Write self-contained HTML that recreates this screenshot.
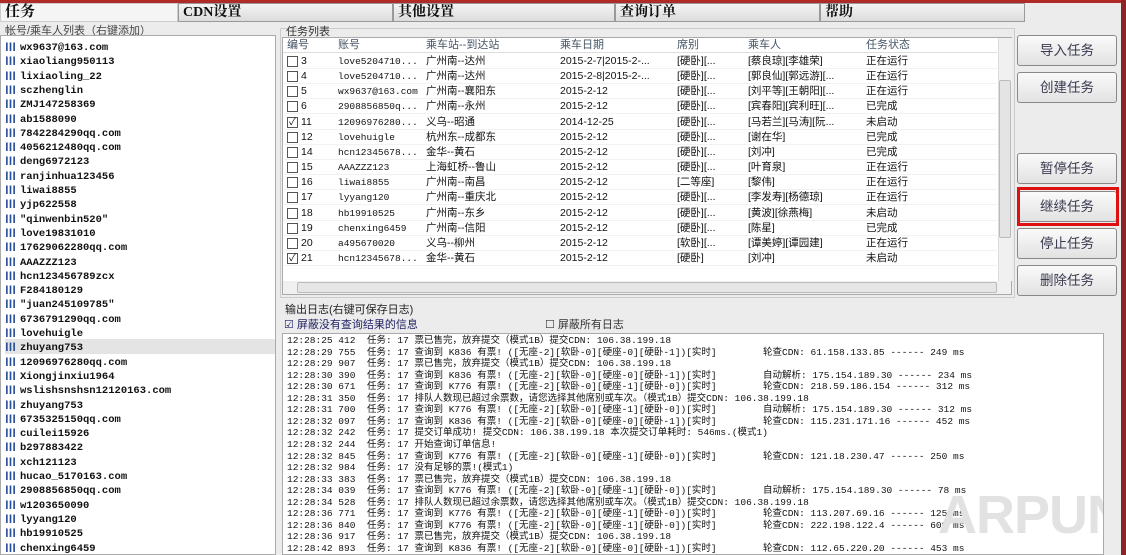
<!DOCTYPE html>
<html><head><meta charset="utf-8"><style>
*{margin:0;padding:0;box-sizing:border-box}
html,body{width:1126px;height:555px;overflow:hidden}
body{background:#ececec;font-family:"Liberation Sans","Noto Sans CJK SC",sans-serif;font-size:11px;color:#111;position:relative}
.a{position:absolute;white-space:nowrap}
.tab{position:absolute;top:3px;height:19px;background:linear-gradient(#f4f4f4,#dcdcdc);border:1px solid #999;font-weight:bold;font-size:14px;font-family:"Liberation Serif","Noto Serif CJK SC",serif;padding-left:4px;line-height:17px}
.mono{font-family:"Liberation Mono","Noto Sans CJK SC",monospace}
.li{position:absolute;left:4px;font-family:"Liberation Mono","Noto Sans CJK SC",monospace;font-weight:bold;font-size:10.5px;white-space:nowrap}
.ic{display:inline-block;width:11px;height:10px;color:#2a4f9a;font-size:11px;font-weight:bold;margin-right:4px;vertical-align:-1px}
.row{position:absolute;left:284px;height:15px;width:713px;font-size:10.5px;line-height:15px}
.row span{position:absolute;white-space:nowrap}
.cb{position:absolute;left:3px;top:2px;width:11px;height:11px;border:1px solid #555;background:#fff;font-size:10px;line-height:9px;text-align:center}
.lg{position:absolute;left:286px;font-family:"Liberation Mono","Noto Sans CJK SC",monospace;font-size:9.5px;white-space:nowrap;line-height:12px}
.lg b{font-weight:normal;position:absolute}
.btn{position:absolute;left:1017px;width:100px;height:31px;border:1px solid #888;border-radius:3px;background:linear-gradient(#fafafa,#e2e2e2);font-size:13.5px;color:#3a3a50;text-align:center;line-height:30px}
</style></head><body>
<div class="a" style="left:0;top:0;width:1126px;height:3px;background:#b02a2a"></div>
<div class="a" style="right:0;top:0;width:5px;height:555px;background:#8b2525"></div>
<div class="tab" style="left:0;width:178px;background:#f5f5f5;border-color:#ccc;font-size:15px">任务</div>
<div class="tab" style="left:178px;width:215px">CDN设置</div>
<div class="tab" style="left:393px;width:222px">其他设置</div>
<div class="tab" style="left:615px;width:205px">查询订单</div>
<div class="tab" style="left:820px;width:205px">帮助</div>
<div class="a" style="left:5px;top:22px;font-size:11px;color:#444">帐号/乘车人列表（右键添加）</div>
<div class="a" style="left:0;top:35px;width:276px;height:520px;background:#fff;border:1px solid #aaa;overflow:hidden"><div id="L"></div></div>
<div class="a" style="left:280px;top:28px;width:735px;height:270px;border:1px solid #ccc"></div>
<div class="a" style="left:286px;top:23px;color:#333">任务列表</div>

<div class="a" style="left:282px;top:37px;width:730px;height:258px;background:#fff;border:1px solid #aaa"></div>
<div class="a" style="left:283px;top:38px;width:714px;height:15px;background:#fff;border-bottom:1px solid #ddd;color:#456;font-size:11px;line-height:15px">
<span class="a" style="left:4px">编号</span><span class="a" style="left:55px">账号</span><span class="a" style="left:143px">乘车站--到达站</span><span class="a" style="left:277px">乘车日期</span><span class="a" style="left:394px">席别</span><span class="a" style="left:465px">乘车人</span><span class="a" style="left:583px">任务状态</span></div>
<div class="a" style="left:998px;top:38px;width:14px;height:243px;background:#f0f0f0;border-left:1px solid #ddd"></div>
<div class="a" style="left:999px;top:80px;width:12px;height:158px;background:#e4e4e4;border:1px solid #bbb;border-radius:2px"></div>
<div class="a" style="left:283px;top:281px;width:728px;height:13px;background:#f0f0f0"></div>
<div class="a" style="left:297px;top:282px;width:700px;height:11px;background:#e6e6e6;border:1px solid #bbb;border-radius:2px"></div>
<div id="T"></div>

<div class="a" style="left:285px;top:301px;color:#222">输出日志(右键可保存日志)</div>
<div class="a" style="left:284px;top:316px;color:#226">☑ 屏蔽没有查询结果的信息</div>
<div class="a" style="left:545px;top:316px;color:#333">☐ 屏蔽所有日志</div>
<div class="a" style="left:282px;top:333px;width:822px;height:222px;background:#fff;border:1px solid #aaa;overflow:hidden"><div id="G"></div>
<div class="a" style="font-size:54px;font-weight:bold;color:#e2e2e2;top:150px;left:655px;letter-spacing:-1px">ARPUN</div></div>

<div class="btn" style="top:35px">导入任务</div>
<div class="btn" style="top:72px">创建任务</div>
<div class="btn" style="top:153px">暂停任务</div>
<div class="btn" style="top:191px">继续任务</div>
<div class="a" style="left:1017px;top:187px;width:102px;height:39px;border:3px solid #e01010"></div>
<div class="btn" style="top:228px">停止任务</div>
<div class="btn" style="top:265px">删除任务</div>

<script>
var acc=["wx9637@163.com","xiaoliang950113","lixiaoling_22","sczhenglin","ZMJ147258369","ab1588090","7842284290qq.com","4056212480qq.com","deng6972123","ranjinhua123456","liwai8855","yjp622558","\"qinwenbin520\"","love19831010","17629062280qq.com","AAAZZZ123","hcn123456789zcx","F284180129","\"juan245109785\"","6736791290qq.com","lovehuigle","zhuyang753","12096976280qq.com","Xiongjinxiu1964","wslishsnshsn12120163.com","zhuyang753","6735325150qq.com","cuilei15926","b297883422","xch121123","hucao_5170163.com","2908856850qq.com","w1203650090","lyyang120","hb19910525","chenxing6459","2908856850"];
var h="";acc.forEach(function(a,i){var y=3+i*14.3;h+='<div class="li" style="top:'+y+'px'+(i==21?';background:#e4e4e4;width:270px':'')+'"><span class="ic">Ⅲ</span>'+a+'</div>'});
document.getElementById("L").outerHTML=h;
var R=[["3","love5204710...","广州南--达州","2015-2-7|2015-2-...","[硬卧][...","[蔡良琼][李雄荣]","正在运行"],["4","love5204710...","广州南--达州","2015-2-8|2015-2-...","[硬卧][...","[郭良仙][郭远游][...","正在运行"],["5","wx9637@163.com","广州南--襄阳东","2015-2-12","[硬卧][...","[刘平等][王朝阳][...","正在运行"],["6","2908856850q...","广州南--永州","2015-2-12","[硬卧][...","[宾春阳][宾利旺][...","已完成"],["11","12096976280...","义乌--昭通","2014-12-25","[硬卧][...","[马若兰][马涛][阮...","未启动",1],["12","lovehuigle","杭州东--成都东","2015-2-12","[硬卧][...","[谢在华]","已完成"],["14","hcn12345678...","金华--黄石","2015-2-12","[硬卧][...","[刘冲]","已完成"],["15","AAAZZZ123","上海虹桥--鲁山","2015-2-12","[硬卧][...","[叶育泉]","正在运行"],["16","liwai8855","广州南--南昌","2015-2-12","[二等座]","[黎伟]","正在运行"],["17","lyyang120","广州南--重庆北","2015-2-12","[硬卧][...","[李发寿][杨德琼]","正在运行"],["18","hb19910525","广州南--东乡","2015-2-12","[硬卧][...","[黄波][徐燕梅]","未启动"],["19","chenxing6459","广州南--信阳","2015-2-12","[硬卧][...","[陈星]","已完成"],["20","a495670020","义乌--柳州","2015-2-12","[软卧][...","[谭美婷][谭园建]","正在运行"],["21","hcn12345678...","金华--黄石","2015-2-12","[硬卧]","[刘冲]","未启动",1]];
h="";var X=[0,54,142,276,393,464,582];R.forEach(function(r,i){var y=54+i*15.15;h+='<div class="row" style="top:'+y+'px;border-bottom:1px solid #f2f2f2"><div class="cb">'+(r[7]?'✓':'')+'</div><span style="left:17px">'+r[0]+'</span>';for(var k=1;k<7;k++)h+='<span class="'+(k==1?'mono':'')+'" style="left:'+X[k]+'px;'+(k==1?'font-size:9.5px':'')+'">'+r[k]+'</span>';h+='</div>'});
document.getElementById("T").outerHTML=h;
var G=[["12:28:25 412","任务: 17 票已售完，放弃提交（模式1B）提交CDN: 106.38.199.18",""],["12:28:29 755","任务: 17  查询到 K836  有票! ([无座-2][软卧-0][硬座-0][硬卧-1])[实时]","轮查CDN: 61.158.133.85 ------ 249 ms"],["12:28:29 907","任务: 17 票已售完，放弃提交（模式1B）提交CDN: 106.38.199.18",""],["12:28:30 390","任务: 17  查询到 K836  有票! ([无座-2][软卧-0][硬座-0][硬卧-1])[实时]","自动解析: 175.154.189.30 ------ 234 ms"],["12:28:30 671","任务: 17  查询到 K776  有票! ([无座-2][软卧-0][硬座-1][硬卧-0])[实时]","轮查CDN: 218.59.186.154 ------ 312 ms"],["12:28:31 350","任务: 17 排队人数现已超过余票数，请您选择其他席别或车次。（模式1B）提交CDN: 106.38.199.18",""],["12:28:31 700","任务: 17  查询到 K776  有票! ([无座-2][软卧-0][硬座-1][硬卧-0])[实时]","自动解析: 175.154.189.30 ------ 312 ms"],["12:28:32 097","任务: 17  查询到 K836  有票! ([无座-2][软卧-0][硬座-0][硬卧-1])[实时]","轮查CDN: 115.231.171.16 ------ 452 ms"],["12:28:32 242","任务: 17 提交订单成功! 提交CDN: 106.38.199.18 本次提交订单耗时: 546ms.(模式1)",""],["12:28:32 244","任务: 17 开始查询订单信息!",""],["12:28:32 845","任务: 17  查询到 K776  有票! ([无座-2][软卧-0][硬座-1][硬卧-0])[实时]","轮查CDN: 121.18.230.47 ------ 250 ms"],["12:28:32 984","任务: 17 没有足够的票!(模式1)",""],["12:28:33 383","任务: 17 票已售完，放弃提交（模式1B）提交CDN: 106.38.199.18",""],["12:28:34 039","任务: 17  查询到 K776  有票! ([无座-2][软卧-0][硬座-1][硬卧-0])[实时]","自动解析: 175.154.189.30 ------ 78 ms"],["12:28:34 528","任务: 17 排队人数现已超过余票数，请您选择其他席别或车次。（模式1B）提交CDN: 106.38.199.18",""],["12:28:36 771","任务: 17  查询到 K776  有票! ([无座-2][软卧-0][硬座-1][硬卧-0])[实时]","轮查CDN: 113.207.69.16 ------ 125 ms"],["12:28:36 840","任务: 17  查询到 K776  有票! ([无座-2][软卧-0][硬座-1][硬卧-0])[实时]","轮查CDN: 222.198.122.4 ------ 609 ms"],["12:28:36 917","任务: 17 票已售完，放弃提交（模式1B）提交CDN: 106.38.199.18",""],["12:28:42 893","任务: 17  查询到 K836  有票! ([无座-2][软卧-0][硬座-0][硬卧-1])[实时]","轮查CDN: 112.65.220.20 ------ 453 ms"]];
h="";G.forEach(function(g,i){var y=1+i*11.55;h+='<div class="lg" style="left:4px;top:'+y+'px"><b style="left:0">'+g[0]+'</b><b style="left:80px">'+g[1]+'</b><b style="left:476px">'+g[2]+'</b></div>'});
document.getElementById("G").outerHTML=h;
</script>
</body></html>
